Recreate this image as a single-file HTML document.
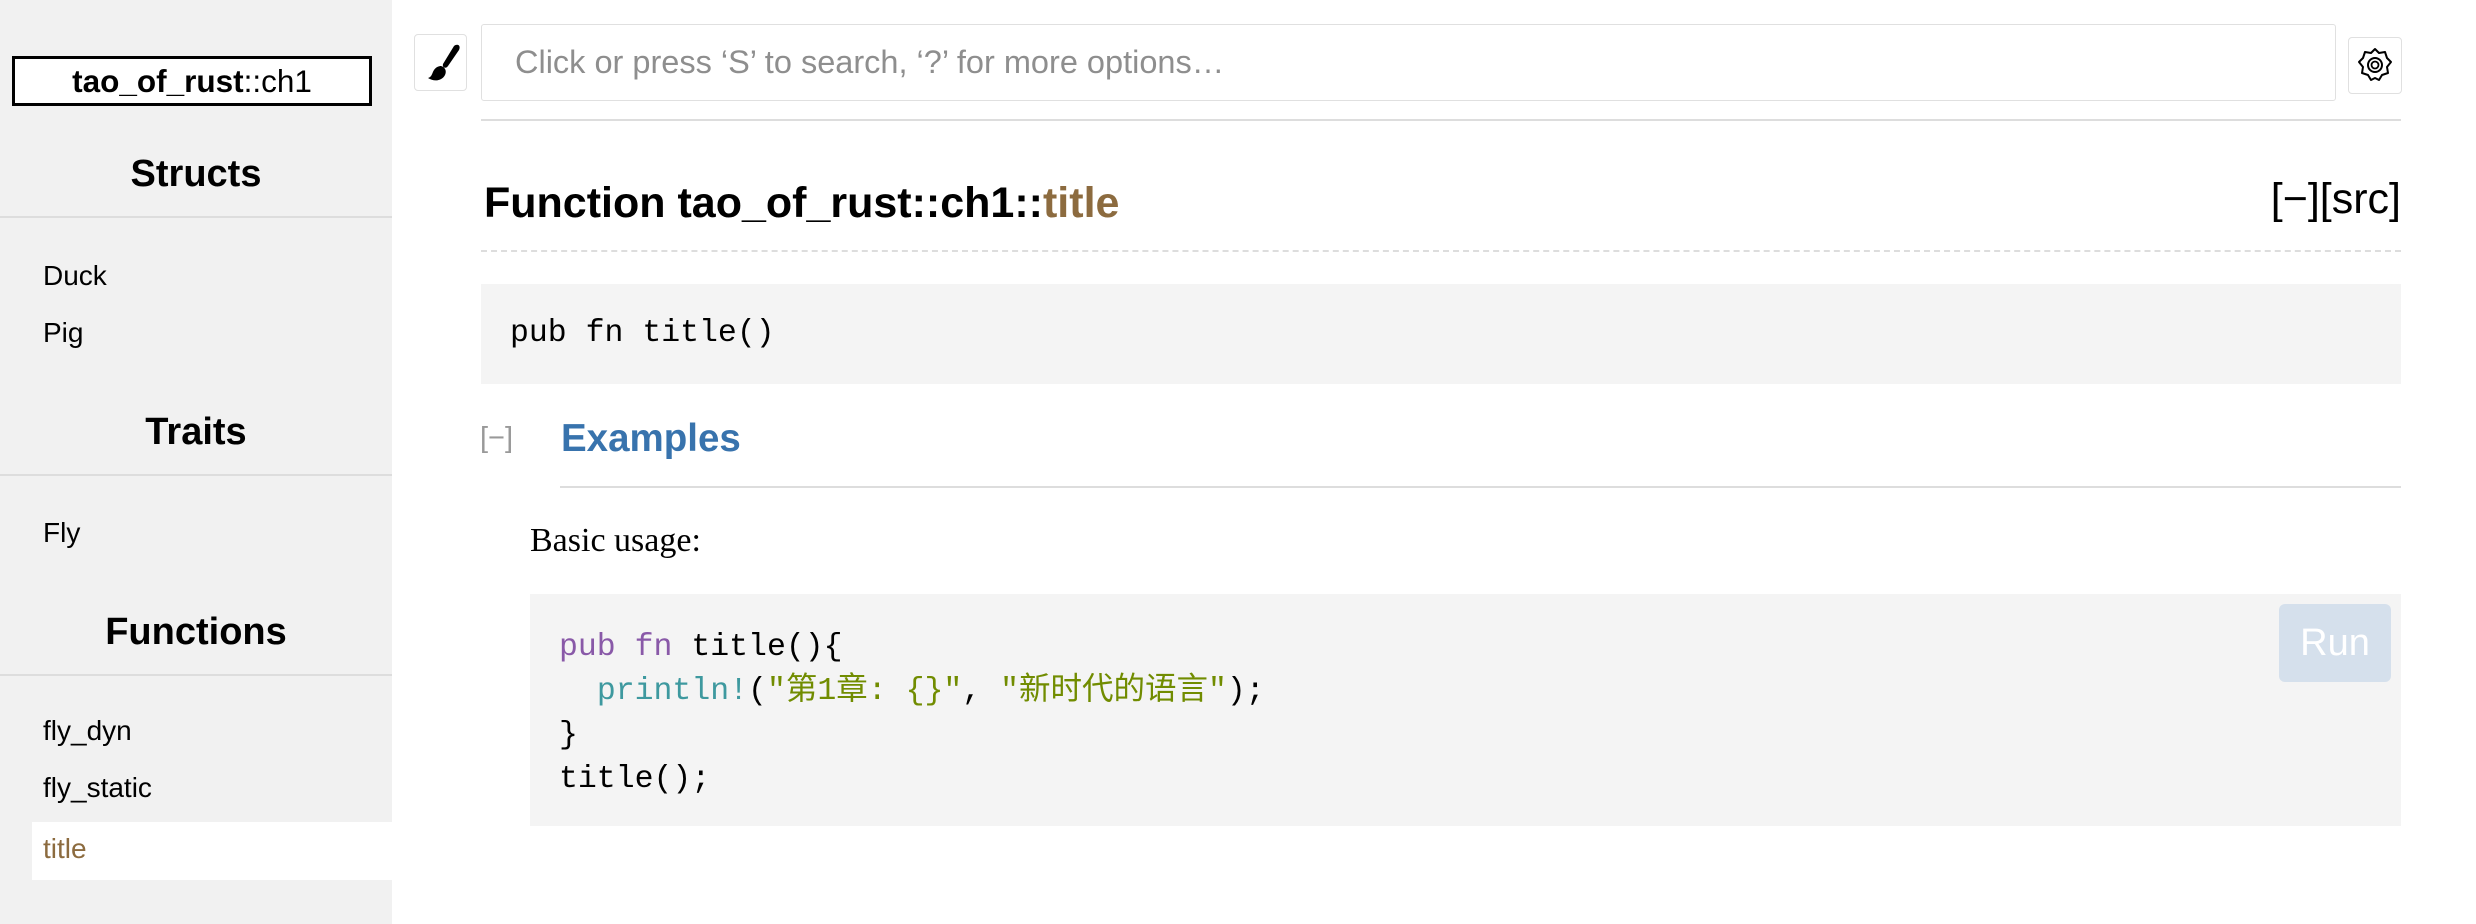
<!DOCTYPE html>
<html><head><meta charset="utf-8"><style>
*{margin:0;padding:0;box-sizing:border-box}
body{width:2476px;height:924px;background:#fff;position:relative;overflow:hidden;font-family:"Liberation Sans","Noto Sans CJK SC",sans-serif;color:#000}
.a{position:absolute;white-space:nowrap}
.sb{position:absolute;left:0;top:0;width:392px;height:924px;background:#f1f1f1}
.h3{position:absolute;left:0;width:392px;text-align:center;font-weight:bold;font-size:38px;line-height:1.117}
.it{position:absolute;left:43px;font-size:28px;line-height:1.117}
.ln{position:absolute;left:0;width:392px;height:2px;background:#ddd}
.mono{font-family:"Liberation Mono","DejaVu Sans Mono","Noto Sans CJK SC",monospace}
.cl{position:absolute;left:559px;font-size:31.5px;line-height:44px;white-space:pre}
</style></head><body>
<div class="sb"></div>
<div class="a" style="left:12px;top:56px;width:360px;height:50px;border:3px solid #000;background:#fff;display:flex;align-items:center;justify-content:center;font-size:31.5px"><b>tao_of_rust</b>::ch1</div>
<div class="h3" style="top:153px">Structs</div>
<div class="ln" style="top:216px"></div>
<div class="it" style="top:260px">Duck</div>
<div class="it" style="top:317px">Pig</div>
<div class="h3" style="top:411px">Traits</div>
<div class="ln" style="top:474px"></div>
<div class="it" style="top:517px">Fly</div>
<div class="h3" style="top:611px">Functions</div>
<div class="ln" style="top:674px"></div>
<div class="it" style="top:715px">fly_dyn</div>
<div class="it" style="top:772px">fly_static</div>
<div class="a" style="left:32px;top:822px;width:360px;height:58px;background:#fff"></div>
<div class="it" style="top:833px;color:#8c6b3f">title</div>

<div class="a" style="left:414px;top:34px;width:53px;height:57px;border:1.5px solid #e0e0e0;border-radius:4px"></div>
<svg class="a" style="left:414px;top:34px" width="53" height="57" viewBox="0 0 53 57"><path d="M40 12 C44 9 47 12 45 16 L34 32 C32 35 28 34 29 30 Z" fill="#000"/><path d="M27 32 C31 33 33 37 31 41 C28 47 20 48 14 44 C18 43 18 39 20 36 C22 33 25 32 27 32 Z" fill="#000"/></svg>
<div class="a" style="left:481px;top:24px;width:1855px;height:77px;border:1.5px solid #e0e0e0;border-radius:3px;font-size:32.5px;color:#8e8e8e;padding-left:33px;line-height:74px">Click or press ‘S’ to search, ‘?’ for more options…</div>
<div class="a" style="left:2348px;top:37px;width:54px;height:57px;border:1.5px solid #e0e0e0;border-radius:4px"></div>
<svg class="a" style="left:2348px;top:37px" width="54" height="57" viewBox="0 0 54 57"><path d="M27 12 L31 16 L37 15 L39 21 L43 25 L39 30 L40 36 L34 38 L31 43 L27 41 L23 43 L20 38 L14 36 L15 30 L11 25 L15 21 L17 15 L23 16 Z" fill="none" stroke="#000" stroke-width="2" stroke-linejoin="round"/><circle cx="27" cy="28" r="7" fill="none" stroke="#000" stroke-width="2"/><circle cx="27" cy="28" r="3.5" fill="none" stroke="#000" stroke-width="1.8"/></svg>
<div class="a" style="left:481px;top:119px;width:1920px;height:2px;background:#ddd"></div>

<div class="a" style="left:484px;top:179px;font-size:43px;font-weight:bold;line-height:1.117">Function tao_of_rust::ch1::<span style="color:#8c6b3f">title</span></div>
<div class="a" style="right:75px;top:175px;font-size:43px;line-height:1.117">[−][src]</div>
<div class="a" style="left:481px;top:250px;width:1920px;border-top:2px dashed #ddd"></div>
<div class="a mono" style="left:481px;top:284px;width:1920px;height:100px;background:#f4f4f4;font-size:31.5px;line-height:100px;padding-left:29px">pub fn title()</div>

<div class="a" style="left:480px;top:420px;font-size:29px;color:#999;line-height:36px">[−]</div>
<div class="a" style="left:561px;top:417px;font-size:38.5px;font-weight:bold;color:#3873ad;line-height:1.117">Examples</div>
<div class="a" style="left:560px;top:486px;width:1841px;height:2px;background:#ddd"></div>
<div class="a" style="left:530px;top:521px;font-family:'Liberation Serif','Noto Serif CJK SC',serif;font-size:34px;line-height:1.15">Basic usage:</div>

<div class="a" style="left:530px;top:594px;width:1871px;height:232px;background:#f4f4f4"></div>
<div class="cl mono" style="top:626px"><span style="color:#8959a8">pub</span> <span style="color:#8959a8">fn</span> title(){</div>
<div class="cl mono" style="top:670px">  <span style="color:#3e999f">println!</span>(<span style="color:#718c00">"第1章: {}"</span>, <span style="color:#718c00">"新时代的语言"</span>);</div>
<div class="cl mono" style="top:714px">}</div>
<div class="cl mono" style="top:758px">title();</div>
<div class="a" style="left:2279px;top:604px;width:112px;height:78px;background:#d5e0ec;border-radius:6px;color:#fff;font-size:38px;text-align:center;line-height:78px">Run</div>
</body></html>
